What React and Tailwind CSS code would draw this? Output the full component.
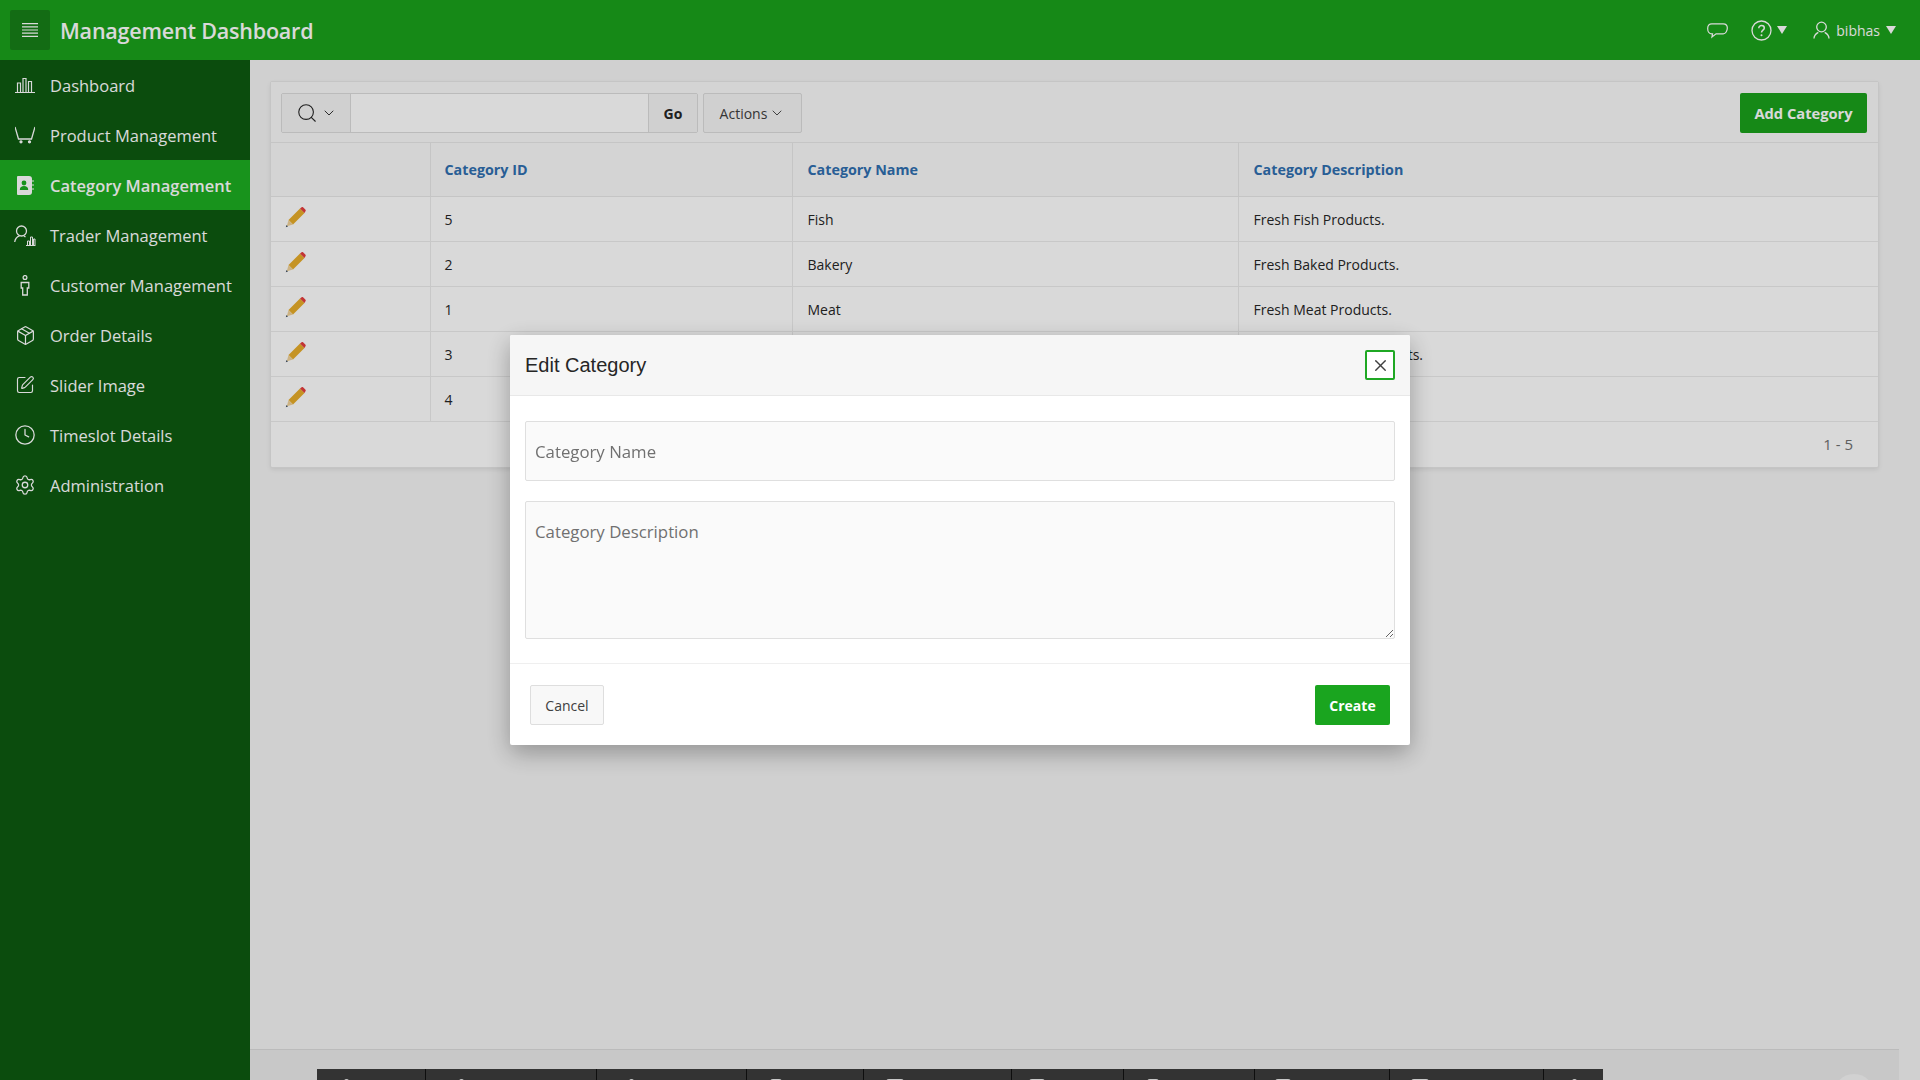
import { Search, ChevronDown, X, Package, SquarePen, Clock, Settings } from 'lucide-react'

const FONT = "font-['Open_Sans','Noto_Sans',sans-serif]"

const rows = [
  { id: 5, name: 'Fish', desc: 'Fresh Fish Products.' },
  { id: 2, name: 'Bakery', desc: 'Fresh Baked Products.' },
  { id: 1, name: 'Meat', desc: 'Fresh Meat Products.' },
  { id: 3, name: 'Vegetables', desc: 'Fresh Vegetable Products.' },
  { id: 4, name: 'Fruits', desc: 'Fresh Fruits.' },
]

const Hamburger = () => (
  <svg width="16" height="14" viewBox="0 0 16 14" stroke="currentColor" strokeWidth="1.2">
    <path d="M0 .6h16M0 3.800h16M0 7h16M0 10.200h16M0 13.400h16" />
  </svg>
)
const Bubble = () => (
  <svg width="21" height="17" viewBox="0 0 22 16" fill="none" stroke="currentColor" strokeWidth="1.300">
    <path d="M5 1h12c2.500 0 4.300 1.700 4.300 4.500S19.500 11.500 17 11.500H9.500L5.200 14.800l.6-3.300H5C2.500 11.500.7 9 .7 5.800S2.500 1 5 1z" />
  </svg>
)
const BarsIcon = () => (
  <svg width="20" height="18" viewBox="0 0 20 18" fill="none" stroke="currentColor" strokeWidth="1.200">
    <path d="M0 16.500h20M2.500 16V7h3v9M8 16V2.500h3V16M13.500 16V5.500h3V16" />
  </svg>
)
const CartIcon = () => (
  <svg width="20" height="18" viewBox="0 0 20 18" fill="none" stroke="currentColor" strokeWidth="1.300">
    <path d="M0 1l3.500 12h13L20 1" />
    <circle cx="6" cy="15.800" r="1" fill="currentColor" />
    <circle cx="14.500" cy="15.800" r="1" fill="currentColor" />
  </svg>
)
const ContactIcon = () => (
  <svg width="18" height="19" viewBox="0 0 18 19" fill="currentColor">
    <path d="M2 0h11a3 3 0 0 1 3 3v13a3 3 0 0 1-3 3H2a1 1 0 0 1-1-1V1a1 1 0 0 1 1-1z" />
    <circle cx="8" cy="7" r="2.400" fill="#1dad21" />
    <path d="M3.800 14c0-3 1.800-4 4.200-4s4.200 1 4.200 4z" fill="#1dad21" />
    <path d="M17 4v2M17 8v2M17 12v2" stroke="currentColor" strokeWidth="1" />
  </svg>
)
const TraderIcon = () => (
  <svg width="22" height="21" viewBox="0 0 22 21" fill="none" stroke="currentColor" strokeWidth="1.300">
    <circle cx="7.500" cy="6" r="5" />
    <path d="M.700 17c.5-3.500 2.800-5.500 4.800-6.200M10 11l1.500 1" />
    <path d="M12 20.500h9.500M13.500 20v-4h2v4M16.500 20v-8h2v8M19.500 20v-6h1.500v6" strokeWidth="1" />
  </svg>
)
const PersonIcon = () => (
  <svg width="12" height="21" viewBox="0 0 12 21" fill="none" stroke="currentColor" strokeWidth="1.300">
    <circle cx="6" cy="2.500" r="1.900" />
    <path d="M2.200 7.500h7.600v5.500h-1.500v7h-4.600v-7H2.200z" />
  </svg>
)
const Pencil = () => (
  <svg width="21" height="21" viewBox="0 0 21 21">
    <path d="M3.500 13 15 1.500 19.500 6 8 17.500z" fill="#e8ad2a" />
    <path d="M3.500 13 8 17.500 1.800 19.200z" fill="#f0d29a" />
    <path d="M.8 20.200 1.500 18l1.500 1.500z" fill="#3c4a5a" />
    <path d="M15 1.500 16.300.4a1.500 1.500 0 0 1 2 0l2 2a1.500 1.500 0 0 1 0 2L19.500 6z" fill="#e53e3e" />
  </svg>
)
const HelpCircle = () => (
  <svg width="21" height="21" viewBox="0 0 21 21" fill="none" stroke="currentColor" strokeWidth="1.300">
    <circle cx="10.500" cy="10.500" r="9.500" />
    <path d="M7.800 8.200c0-1.600 1.200-2.600 2.800-2.600s2.700 1 2.700 2.400c0 2.200-2.800 2.200-2.800 4.600" strokeWidth="1.500" />
    <circle cx="10.500" cy="15.300" r="1" fill="currentColor" stroke="none" />
  </svg>
)
const UserIcon = () => (
  <svg width="17" height="18" viewBox="0 0 17 18" fill="none" stroke="currentColor" strokeWidth="1.300">
    <circle cx="8.500" cy="6" r="4.800" />
    <path d="M1 17.500c0-3.300 2-5 4.300-6.200M16 17.500c0-3.300-2-5-4.300-6.200" />
  </svg>
)
const Caret = () => <span className="block w-0 h-0 border-x-[5.500px] border-x-transparent border-t-[8px] border-t-current" />

const nav = [
  { label: 'Dashboard', icon: <BarsIcon /> },
  { label: 'Product Management', icon: <CartIcon /> },
  { label: 'Category Management', icon: <ContactIcon />, active: true },
  { label: 'Trader Management', icon: <TraderIcon /> },
  { label: 'Customer Management', icon: <PersonIcon /> },
  { label: 'Order Details', icon: <Package size={21} strokeWidth={1.4} /> },
  { label: 'Slider Image', icon: <SquarePen size={20} strokeWidth={1.4} /> },
  { label: 'Timeslot Details', icon: <Clock size={22} strokeWidth={1.4} /> },
  { label: 'Administration', icon: <Settings size={22} strokeWidth={1.4} /> },
]

// dev toolbar cut off by the window: cell width, icon offset and width of the bit that shows
const devCells = [
  { w: 109, x: 27, g: 5 },
  { w: 171, x: 33, g: 5 },
  { w: 150, x: 32, g: 5 },
  { w: 117, x: 23, g: 12 },
  { w: 148, x: 22, g: 18 },
  { w: 112, x: 17, g: 16 },
  { w: 131, x: 23, g: 12 },
  { w: 135, x: 20, g: 16 },
  { w: 154, x: 21, g: 18 },
  { w: 59, x: 28, g: 5 },
]

export default function App() {
  return (
    <div className={`h-screen overflow-hidden bg-[#f5f5f5] flex flex-col text-[#262626] ${FONT}`}>
      <header className="h-[60px] shrink-0 bg-[#1ba21c] flex items-center pl-[10px] pr-[24px] text-white">
        <button className="w-10 h-10 rounded-[2px] bg-[#177f18] flex items-center justify-center">
          <Hamburger />
        </button>
        <h1 className="ml-[10px] pt-[2px] text-[21.5px] font-semibold tracking-[-0.2px]">Management Dashboard</h1>
        <div className="ml-auto flex items-center">
          <Bubble />
          <span className="ml-[23px]"><HelpCircle /></span>
          <span className="ml-[5px]"><Caret /></span>
          <span className="ml-[26px]"><UserIcon /></span>
          <span className="ml-[6px] text-[14px]">bibhas</span>
          <span className="ml-[6px]"><Caret /></span>
        </div>
      </header>

      <div className="flex flex-1 min-h-0">
        <aside className="w-[250px] shrink-0 bg-[#0d5a10] text-white">
          {nav.map((n) => (
            <div key={n.label} className={`h-[50px] flex items-center text-[16.500px] ${n.active ? 'bg-[#1dad21] font-semibold' : ''}`}>
              <span className="w-[50px] px-[13px] flex justify-center shrink-0">{n.icon}</span>
              <span className="pt-[2px]">{n.label}</span>
            </div>
          ))}
        </aside>

        <main className="flex-1 min-w-0 flex flex-col">
          <div className="flex-1 pt-[21px] pl-[20px] pr-[41px]">
            <section className="bg-white border border-[#e8e8e8] rounded-[2px] shadow-[0_2px_4px_rgba(0,0,0,0.08)]">
              <div className="h-[61px] bg-[#fafafa] border-b border-[#e8e8e8] flex items-center pl-[10px] pr-[11px] pt-[2px]">
                <div className="flex h-10 w-[417px] border border-[#dcdcdc] rounded-[2px]">
                  <div className="w-[69px] bg-[#f5f5f5] border-r border-[#dcdcdc] flex items-center justify-center gap-[3px]">
                    <Search size={22} strokeWidth={1.2} />
                    <ChevronDown size={16} strokeWidth={1.4} />
                  </div>
                  <div className="flex-1 bg-white" />
                  <div className="w-[49px] bg-[#f5f5f5] border-l border-[#dcdcdc] flex items-center justify-center text-[14px] font-bold">Go</div>
                </div>
                <div className="ml-[5px] h-10 w-[99px] bg-[#f5f5f5] border border-[#dcdcdc] rounded-[2px] flex items-center justify-center gap-[2px] text-[14px] text-[#404040]">
                  Actions
                  <ChevronDown size={16} strokeWidth={1.4} />
                </div>
                <button className="ml-auto h-10 w-[127px] bg-[#1ba21c] rounded-[2px] text-white text-[14.700px] font-bold">Add Category</button>
              </div>

              <table className="w-full table-fixed border-collapse text-[14px]">
                <colgroup>
                  <col className="w-[159px]" />
                  <col className="w-[362px]" />
                  <col className="w-[446px]" />
                  <col />
                </colgroup>
                <thead>
                  <tr className="h-[53px] bg-[#fafafa]">
                    <th className="border-r border-b border-[#e8e8e8]" />
                    <th className="border-r border-b border-[#e8e8e8] px-[14px] text-left text-[14.300px] font-bold text-[#2f6fb0]">Category ID</th>
                    <th className="border-r border-b border-[#e8e8e8] px-[15px] text-left text-[14.300px] font-bold text-[#2f6fb0]">Category Name</th>
                    <th className="border-b border-[#e8e8e8] px-[15px] text-left text-[14.300px] font-bold text-[#2f6fb0]">Category Description</th>
                  </tr>
                </thead>
                <tbody>
                  {rows.map((r) => (
                    <tr key={r.id} className="h-[45px]">
                      <td className="border-r border-b border-[#ececec] pl-[14px]">
                        <span className="block -mt-[2px]"><Pencil /></span>
                      </td>
                      <td className="border-r border-b border-[#ececec] px-[14px] pt-[2px]">{r.id}</td>
                      <td className="border-r border-b border-[#ececec] px-[15px] pt-[2px]">{r.name}</td>
                      <td className="border-b border-[#ececec] px-[15px] pt-[2px]">{r.desc}</td>
                    </tr>
                  ))}
                </tbody>
              </table>
              <div className="h-[45px] flex items-center justify-end pr-[25px] text-[15px] text-[#707070]">1 - 5</div>
            </section>
          </div>

          <footer className="h-[31px] shrink-0 mr-[21px] bg-[#ececec] border-t border-[#dcdcdc] relative">
            <div className="absolute left-[67px] top-[19px] h-[40px] flex bg-[#3d3d3d] text-white">
              {devCells.map((c, i) => (
                <div key={i} style={{ width: c.w, paddingLeft: c.x }} className="border-r last:border-r-0 border-[#111] pt-[10px]">
                  <span style={{ width: c.g }} className="block h-[10px] rounded-t-[3px] bg-white/90" />
                </div>
              ))}
            </div>
            <div className="absolute right-[24px] top-[24px] w-[42px] h-[42px] rounded-full bg-[#f6f6f6]" />
          </footer>
        </main>
      </div>

      {/* Overlay */}
      <div className="fixed inset-0 z-40 bg-black/15" />

      {/* Dialog */}
      <div className="fixed z-50 left-[510px] top-[335px] w-[900px] h-[410px] bg-white rounded-[2px] flex flex-col shadow-[0_8px_24px_rgba(0,0,0,0.3)]">
        <div className="h-[61px] shrink-0 bg-[#f6f6f6] border-b border-[#e8e8e8] flex items-center justify-between px-[15px] rounded-t-[2px]">
          <h2 className="font-['Liberation_Sans',sans-serif] text-[20px] text-[#262626]">Edit Category</h2>
          <button className="w-[30px] h-[30px] bg-white border-2 border-[#1fa824] rounded-[2px] flex items-center justify-center text-[#404040]">
            <X size={19} strokeWidth={1.7} />
          </button>
        </div>
        <div className="flex-1 px-[15px] pt-[25px] border-b border-[#efefef]">
          <input
            readOnly
            placeholder="Category Name"
            className="block w-full h-[60px] bg-[#fafafa] border border-[#dfdfdf] rounded-[2px] px-[9px] text-[16.800px] placeholder:text-[#707070] outline-none"
          />
          <textarea
            readOnly
            placeholder="Category Description"
            className="block mt-[20px] w-full h-[138px] bg-[#fafafa] border border-[#dfdfdf] rounded-[2px] px-[9px] pt-[17px] text-[16.800px] placeholder:text-[#707070] outline-none"
          />
        </div>
        <div className="h-[81px] shrink-0 flex items-center justify-between px-[20px]">
          <button className="h-10 w-[74px] bg-[#f8f8f8] border border-[#dedede] rounded-[2px] pt-[1px] text-[14px] text-[#404040]">Cancel</button>
          <button className="h-10 w-[75px] bg-[#1aa51f] rounded-[2px] pt-[1px] text-white text-[14px] font-bold">Create</button>
        </div>
      </div>
    </div>
  )
}
